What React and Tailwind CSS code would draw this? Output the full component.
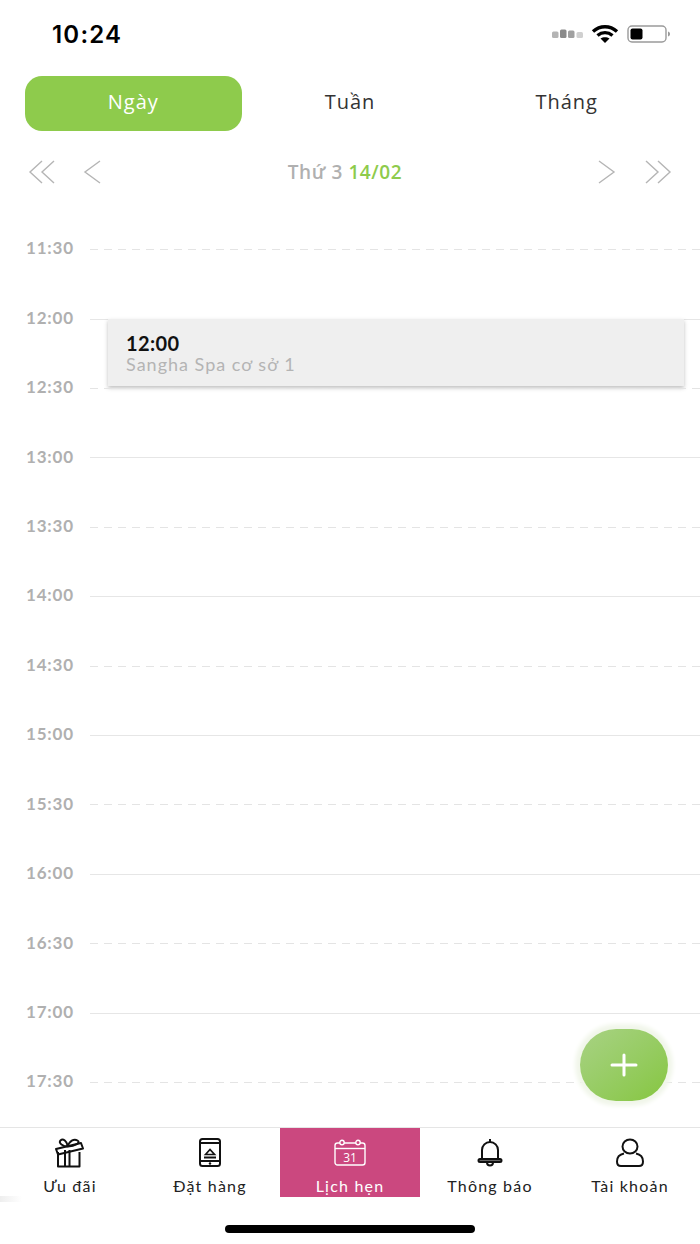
const times = ['11:30','12:00','12:30','13:00','13:30','14:00','14:30','15:00','15:30','16:00','16:30','17:00','17:30'];

function Chevron({ double, flip }) {
  return (
    <svg width="28" height="24" viewBox="0 0 28 24" fill="none" stroke="#b5b5b5" strokeWidth="1.4" className={flip ? 'rotate-180' : ''}>
      <path d={double ? 'M14 1 2 12l12 11M26 1 14 12l12 11' : 'M21 1 6 12l15 11'} />
    </svg>
  );
}

function StatusIcons() {
  return (
    <div className="flex items-center gap-[8px]">
      <svg width="31" height="10" viewBox="0 0 31 10">
        <rect x="0" y="2.5" width="6.500" height="6.500" rx="1.500" fill="#b4b4b4" />
        <rect x="8" y="0.5" width="6.500" height="8.500" rx="1.500" fill="#8a8a8a" />
        <rect x="16" y="1.500" width="6.500" height="7.500" rx="1.500" fill="#a0a0a0" />
        <rect x="24.500" y="3" width="6.500" height="6" rx="1.500" fill="#d0d0d0" />
      </svg>
      <svg width="28" height="20" viewBox="0 0 28 20" fill="none" stroke="#000" strokeWidth="3.400">
        <path d="M2 7.500C9 1.200 19 1.200 26 7.500" />
        <path d="M6.500 11.500c4.500-3.800 10.500-3.800 15 0" />
        <path d="M14 19l-4.500-4.500c2.500-1.800 6.500-1.800 9 0z" fill="#000" stroke="none" />
      </svg>
      <svg width="44" height="18" viewBox="0 0 44 18" fill="none">
        <rect x="1" y="1" width="38" height="16" rx="4" stroke="#9a9a9a" strokeWidth="1.400" />
        <rect x="3.500" y="3.500" width="12" height="11" rx="2" fill="#000" />
        <path d="M41 6.500c1.500.5 2 1.500 2 2.500s-.5 2-2 2.500z" fill="#9a9a9a" />
      </svg>
    </div>
  );
}

function GiftIcon() {
  return (
    <svg width="32" height="30" viewBox="0 0 32 30" fill="none" stroke="#111" strokeWidth="2" strokeLinejoin="round">
      <path d="M4 14v14.500h21.500V14" />
      <path d="M11 12v16.500M15.500 12v16.500" />
      <path d="M2 11 27 5l2 5.500L4 16.500z" />
      <path d="M14 8.500C9 8.500 4 5 6.500 2.500S13 3 14 8.500zM14 8.500c1-5.500 6-8 9.500-6S21 8.500 14 8.500z" />
    </svg>
  );
}

function PhoneIcon() {
  return (
    <svg width="24" height="30" viewBox="0 0 24 30" fill="none" stroke="#111" strokeWidth="2">
      <rect x="2" y="1" width="20" height="27" rx="2.500" />
      <path d="M2 5h20M2 23h20" />
      <path d="M7.500 16.500 12 11.500l4.500 5z" strokeWidth="1.700" />
      <path d="M6 19.500h12" />
      <circle cx="12" cy="25.500" r="1.200" fill="#111" stroke="none" />
    </svg>
  );
}

function CalendarIcon() {
  return (
    <svg width="32" height="28" viewBox="0 0 32 28" fill="none" stroke="#fff" strokeWidth="1.400">
      <rect x="1" y="4" width="30" height="22" rx="2.500" />
      <path d="M1 9.500h30" />
      <circle cx="8" cy="3.500" r="2.200" fill="#cb487f" />
      <circle cx="24" cy="3.500" r="2.200" fill="#cb487f" />
      <text x="16" y="22.500" textAnchor="middle" fontSize="12" fill="#fff" stroke="none" fontFamily="Open Sans, sans-serif">31</text>
    </svg>
  );
}

function BellIcon() {
  return (
    <svg width="26" height="30" viewBox="0 0 26 30" fill="none" stroke="#111" strokeWidth="2" strokeLinejoin="round">
      <path d="M13 1v3" />
      <path d="M5 21v-9a8 8 0 0 1 16 0v9" />
      <rect x="1.500" y="21" width="23" height="3" rx="1.500" fill="#666" />
      <path d="M10 24.500a3 3 0 0 0 6 0" />
    </svg>
  );
}

function UserIcon() {
  return (
    <svg width="30" height="30" viewBox="0 0 30 30" fill="none" stroke="#111" strokeWidth="2">
      <ellipse cx="15" cy="8.500" rx="7.500" ry="7" />
      <path d="M9 15.500C4 16.500 2 19.500 2 23.500c0 3 1.500 4.500 4 4.500h18c2.500 0 4-1.500 4-4.500 0-4-2-7-7-8" />
    </svg>
  );
}

const navItems = [
  { label: 'Ưu đãi', icon: <GiftIcon /> },
  { label: 'Đặt hàng', icon: <PhoneIcon /> },
  { label: 'Lịch hẹn', icon: <CalendarIcon />, active: true },
  { label: 'Thông báo', icon: <BellIcon /> },
  { label: 'Tài khoản', icon: <UserIcon /> },
];

export default function App() {
  return (
    <div className="relative w-[700px] h-[1244px] bg-white overflow-hidden font-['Open_Sans',sans-serif]">
      {/* status bar */}
      <div className="h-[76px] flex items-start justify-between pl-[52px] pr-[29px] pt-[19px]">
        <span className="font-['Inter',sans-serif] text-[24px] leading-[32px] font-semibold text-black tracking-[1.2px]">10:24</span>
        <div className="pt-[5px]"><StatusIcons /></div>
      </div>

      {/* tabs */}
      <div className="grid grid-cols-3 px-[25px] h-[55px] text-[20px] tracking-[1px] leading-[52px]">
        <div className="text-center rounded-[17px] bg-[#8ecb4c] text-white">Ngày</div>
        <div className="text-center text-[#333]">Tuần</div>
        <div className="text-center text-[#333]">Tháng</div>
      </div>

      {/* date nav */}
      <div className="flex items-center justify-between h-[48px] mt-[17px] pl-[28px] pr-[28px]">
        <div className="flex items-center gap-[23px]">
          <Chevron double />
          <Chevron />
        </div>
        <div className="mr-[9px] text-[19px] font-semibold text-[#b0b0b0] tracking-[0.6px]">
          Thứ 3 <span className="text-[#8ecb4c]">14/02</span>
        </div>
        <div className="flex items-center gap-[24px]">
          <Chevron flip />
          <Chevron double flip />
        </div>
      </div>

      {/* time grid */}
      <div className="mt-[19px]">
        {times.map((t, i) => (
          <div key={t} className="relative flex items-center h-[69.42px]">
            <span className="w-[90px] pl-[26px] pb-[3px] font-['Lato',sans-serif] text-[17px] font-bold text-[#b0b0b0] tracking-[0.8px]">{t}</span>
            {i % 2 === 0 ? (
              <div className="flex-1 h-px bg-[repeating-linear-gradient(to_right,#e4e4e4_0,#e4e4e4_8px,transparent_8px,transparent_14px)]" />
            ) : (
              <div className="flex-1 h-px bg-[#e6e6e6]" />
            )}
            {t === '12:00' && (
              <div className="absolute left-[108px] top-[35px] w-[576px] h-[67px] bg-[#efefef] pl-[18px] pt-[13px] shadow-[0_2px_4px_rgba(0,0,0,0.25)]">
                <div className="font-['Lato',sans-serif] text-[20px] leading-[22px] font-bold text-[#111] tracking-[0.4px]">12:00</div>
                <div className="font-['Lato',sans-serif] text-[18px] leading-[21px] text-[#b4b4b4] tracking-[1px]">Sangha Spa cơ sở 1</div>
              </div>
            )}
          </div>
        ))}
      </div>

      {/* add button */}
      <div className="absolute left-[580px] top-[1029px] w-[88px] h-[72px] rounded-full bg-gradient-to-br from-[#a8d283] to-[#86c63e] flex items-center justify-center shadow-[0_0_4px_5px_#f1f6ea]">
        <svg width="28" height="24" viewBox="0 0 28 24" stroke="#fff" strokeWidth="3" strokeLinecap="round">
          <path d="M2 12h24M14 2v20" />
        </svg>
      </div>

      {/* bottom nav */}
      <div className="absolute left-0 right-0 top-[1127px] border-t border-[#e5e5e5] grid grid-cols-5 h-[70px]">
        {navItems.map((item) => (
          <div key={item.label} className={`flex flex-col items-center ${item.active ? 'bg-[#cb487f] text-white' : 'text-[#222]'}`}>
            <div className="h-[32px] mt-[9px] flex items-center justify-center">{item.icon}</div>
            <span className="font-['Lato',sans-serif] text-[16px] leading-[20px] mt-[7px] tracking-[1.2px]">{item.label}</span>
          </div>
        ))}
      </div>
      <div className="absolute left-0 top-[1196px] w-[22px] h-[6px] bg-gradient-to-r from-[#eeeeee] to-transparent" />

      {/* home indicator */}
      <div className="absolute left-[225px] top-[1225px] w-[250px] h-[8px] rounded-full bg-black" />
    </div>
  );
}
